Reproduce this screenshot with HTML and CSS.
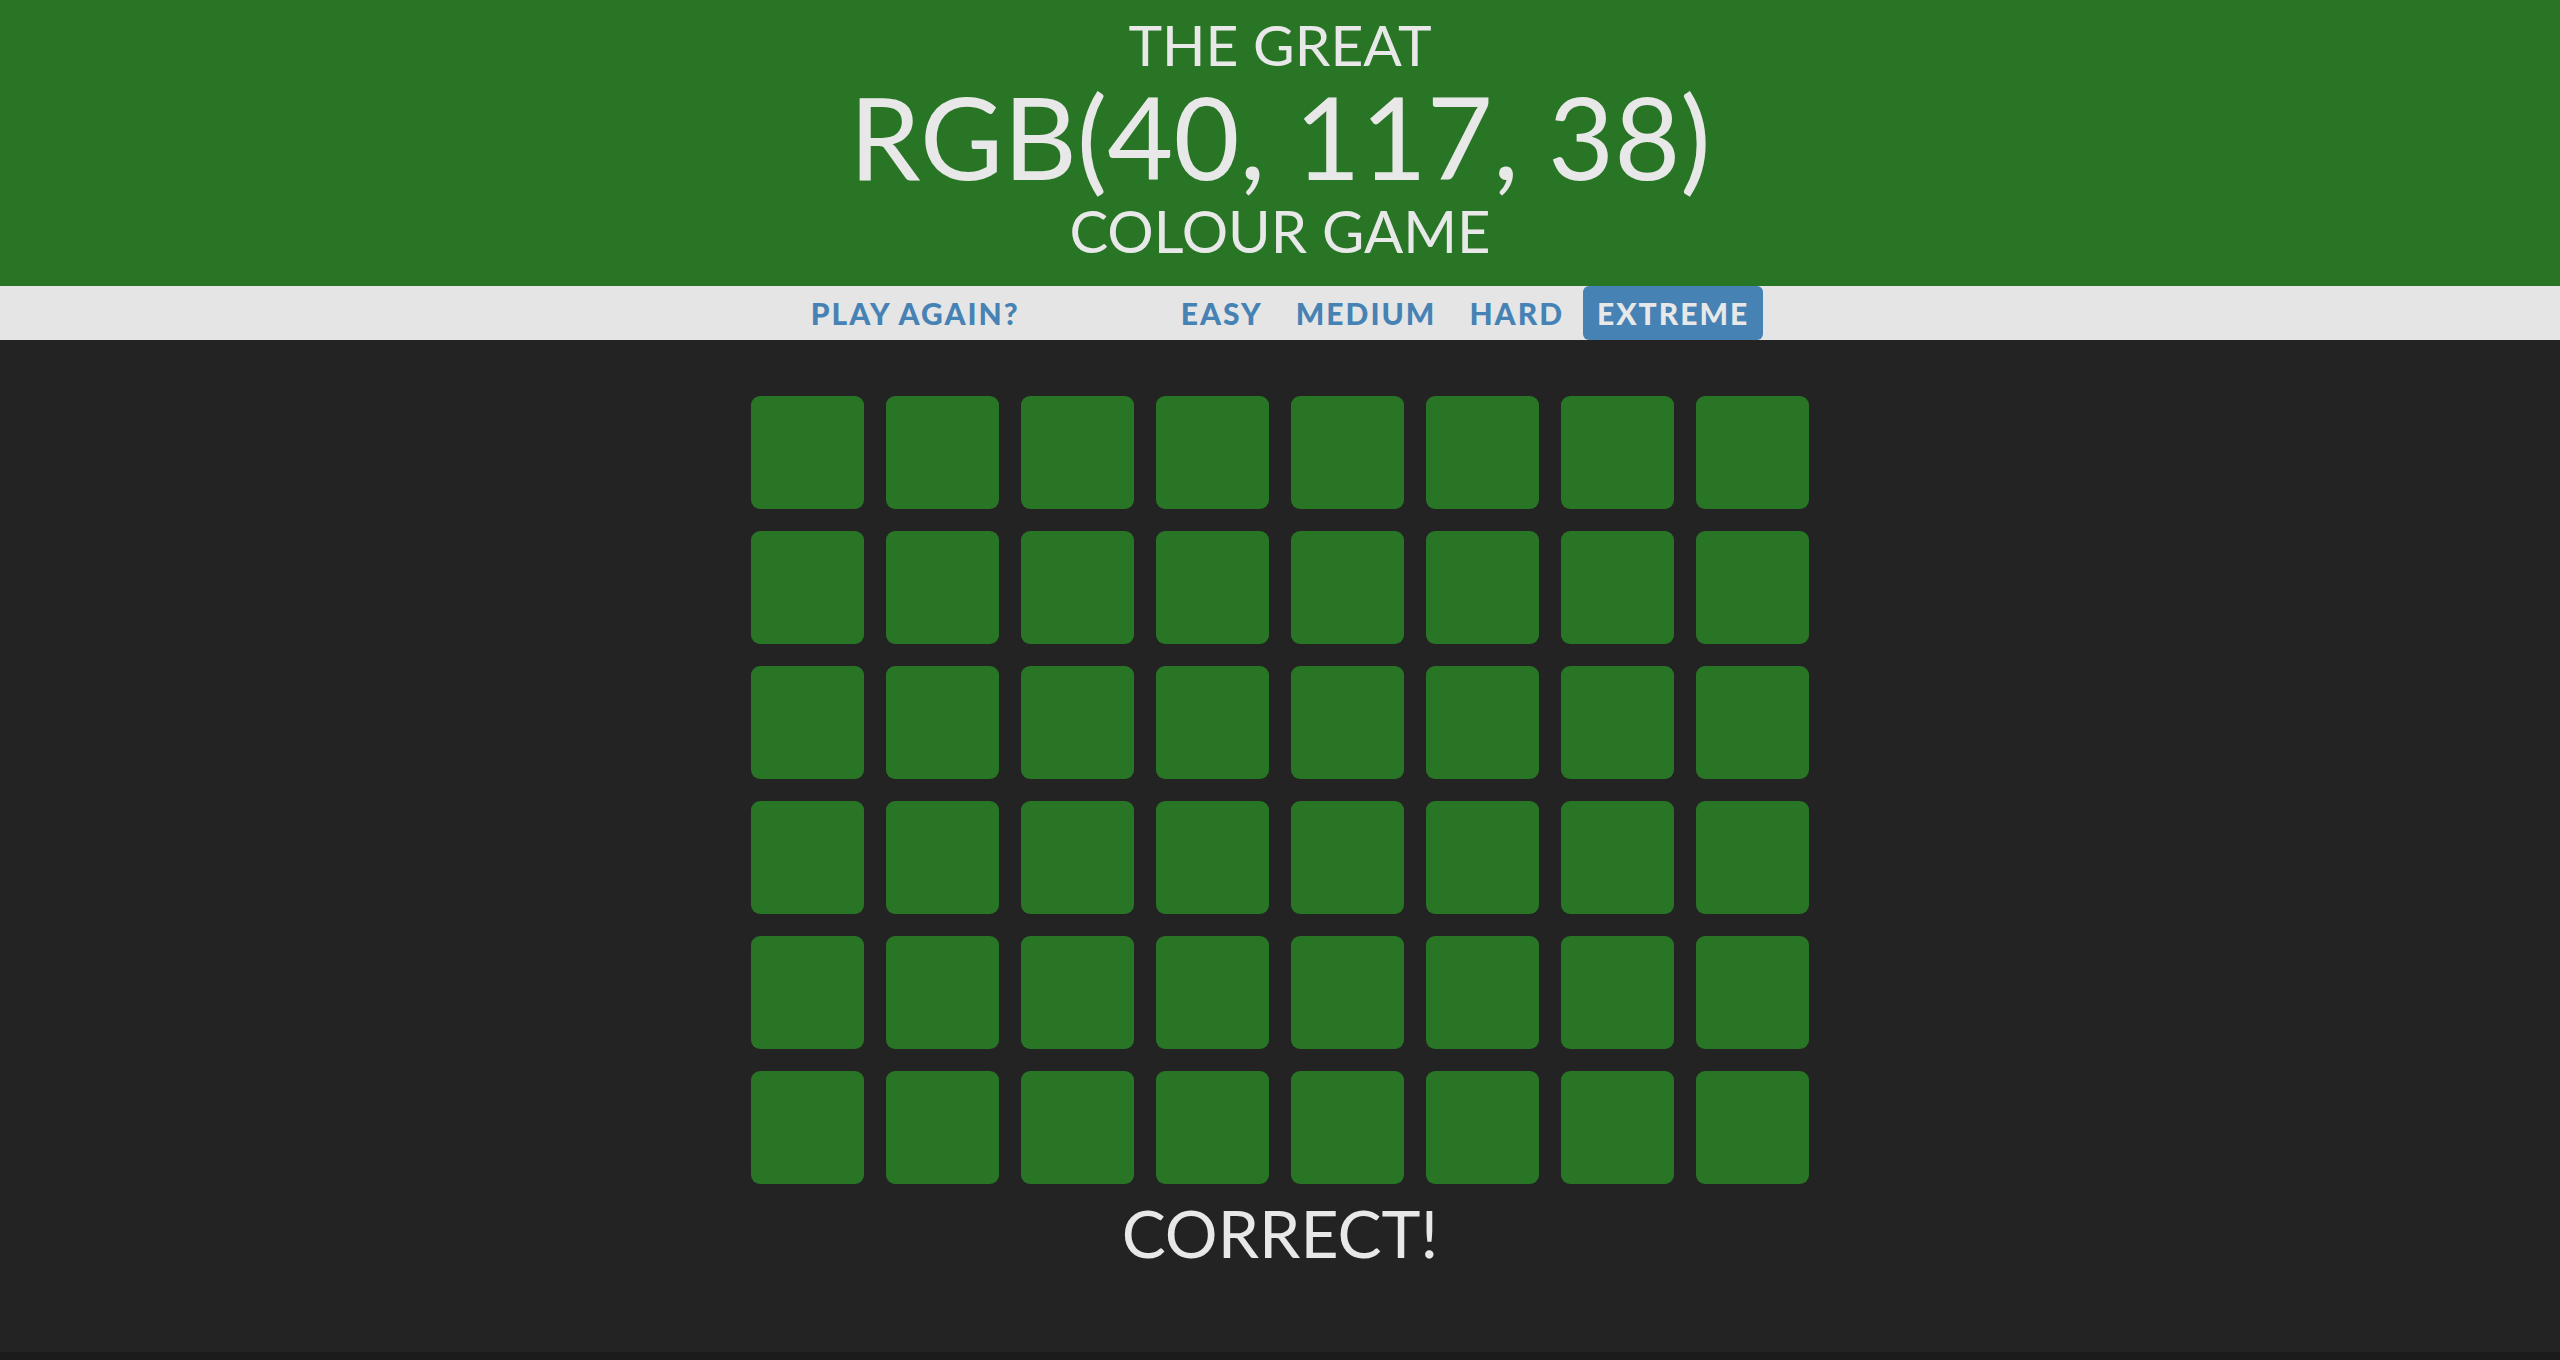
FILE: index.html
```html
<!DOCTYPE html>
<html lang="en">
<head>
<meta charset="utf-8">
<title>The Great RGB Colour Game</title>
<link rel="stylesheet" href="styles.css">
</head>
<body>
<header class="hero">
  <div class="hero-line hero-small">THE GREAT</div>
  <div class="hero-line hero-big">RGB(40, 117, 38)</div>
  <div class="hero-line hero-small hero-last">COLOUR GAME</div>
</header>
<nav class="stripe">
  <button class="nav-btn">PLAY AGAIN?</button>
  <span class="spacer"></span>
  <button class="nav-btn">EASY</button>
  <button class="nav-btn">MEDIUM</button>
  <button class="nav-btn">HARD</button>
  <button class="nav-btn selected">EXTREME</button>
</nav>
<main class="board">
  <div class="grid">
    <div class="square"></div><div class="square"></div><div class="square"></div><div class="square"></div><div class="square"></div><div class="square"></div><div class="square"></div><div class="square"></div>
    <div class="square"></div><div class="square"></div><div class="square"></div><div class="square"></div><div class="square"></div><div class="square"></div><div class="square"></div><div class="square"></div>
    <div class="square"></div><div class="square"></div><div class="square"></div><div class="square"></div><div class="square"></div><div class="square"></div><div class="square"></div><div class="square"></div>
    <div class="square"></div><div class="square"></div><div class="square"></div><div class="square"></div><div class="square"></div><div class="square"></div><div class="square"></div><div class="square"></div>
    <div class="square"></div><div class="square"></div><div class="square"></div><div class="square"></div><div class="square"></div><div class="square"></div><div class="square"></div><div class="square"></div>
    <div class="square"></div><div class="square"></div><div class="square"></div><div class="square"></div><div class="square"></div><div class="square"></div><div class="square"></div><div class="square"></div>
  </div>
  <div class="message">CORRECT!</div>
</main>
</body>
</html>
```

FILE: styles.css
```css
html {
  background: #1b1b1b;
}
body {
  margin: 0;
  background: #232323;
  min-height: 1352px;
  font-family: Lato, "Open Sans", sans-serif;
  color: #e8e8e8;
}
.hero {
  background: #287526;
  text-align: center;
  padding-bottom: 8px;
}
.hero-line {
  font-weight: 400;
}
.hero-small {
  font-size: 57px;
  line-height: 88px;
}
.hero-big {
  font-size: 114px;
  line-height: 96px;
}
.hero-last {
  font-size: 58px;
  line-height: 94px;
}
.stripe {
  background: #e5e5e5;
  height: 54px;
  display: flex;
  justify-content: center;
  align-items: stretch;
  gap: 5px;
}
.spacer {
  width: 123px;
}
.nav-btn {
  border: none;
  background: transparent;
  color: #4682b4;
  font-family: Lato, "Open Sans", sans-serif;
  font-weight: 900;
  font-size: 30px;
  letter-spacing: 2px;
  padding: 0 14px;
  border-radius: 6px;
  margin: 0;
}
.nav-btn.selected {
  background: #4682b4;
  color: #e8e8e8;
}
.board {
  padding-top: 56px;
}
.grid {
  width: 1058px;
  margin: 0 auto;
  display: grid;
  grid-template-columns: repeat(8, 1fr);
  gap: 21.5px;
}
.square {
  aspect-ratio: 1;
  background: #287526;
  border-radius: 9px;
}
.message {
  text-align: center;
  font-size: 66px;
  line-height: 80px;
  margin-top: 9px;
}
```
